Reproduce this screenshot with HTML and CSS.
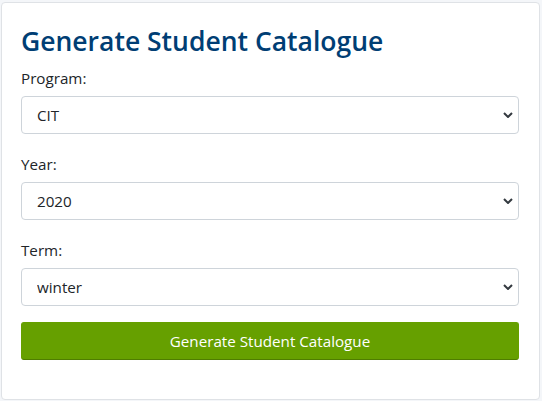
FILE: index.html
```html
<!DOCTYPE html>
<html lang="en">
<head>
<meta charset="utf-8">
<title>Generate Student Catalogue</title>
<link rel="stylesheet" href="styles.css">
</head>
<body>
<div class="card">
  <h1 class="title">Generate Student Catalogue</h1>
  <form class="form">
    <div class="group">
      <label class="label" for="program">Program:</label>
      <select class="select" id="program"><option>CIT</option></select>
    </div>
    <div class="group">
      <label class="label" for="year">Year:</label>
      <select class="select" id="year"><option>2020</option></select>
    </div>
    <div class="group">
      <label class="label" for="term">Term:</label>
      <select class="select" id="term"><option>winter</option></select>
    </div>
    <button class="btn" type="button">Generate Student Catalogue</button>
  </form>
</div>
</body>
</html>
```
FILE: styles.css
```css
html, body {
  margin: 0;
  height: 100%;
}
body {
  background: #f4f6f9;
  padding: 2px 2px 0 1px;
  box-sizing: border-box;
  font-family: "Open Sans", "Noto Sans", sans-serif;
  color: #212529;
}
.card {
  background: #fff;
  border: 1px solid #dfe2e6;
  border-radius: 4px;
  padding: 21px 20px 39px 19px;
}
.title {
  margin: 0 0 6px;
  font-size: 26.5px;
  line-height: 34px;
  font-weight: 600;
  color: #003e74;
}
.form {
  display: flex;
  flex-direction: column;
}
.group {
  display: flex;
  flex-direction: column;
  margin-bottom: 16px;
}
.label {
  font-size: 15.2px;
  line-height: 24px;
  margin: 2px 0 6px;
}
.select {
  appearance: none;
  -webkit-appearance: none;
  height: 38px;
  border: 1px solid #ced4da;
  border-radius: 4px;
  background: #fff url("data:image/svg+xml,%3Csvg xmlns='http://www.w3.org/2000/svg' viewBox='0 0 10 6'%3E%3Cpath d='M1 1l4 4 4-4' fill='none' stroke='%23343a40' stroke-width='2'/%3E%3C/svg%3E") no-repeat right 5px center / 10px 6px;
  padding: 0 24px 0 15px;
  font-family: inherit;
  font-size: 15.2px;
  color: #212529;
}
.btn {
  height: 38px;
  background: #66a000;
  border: 1px solid #66a000;
  border-bottom-color: #4f7d00;
  border-radius: 3px;
  color: #fff;
  font-family: inherit;
  font-size: 15.2px;
}
```
